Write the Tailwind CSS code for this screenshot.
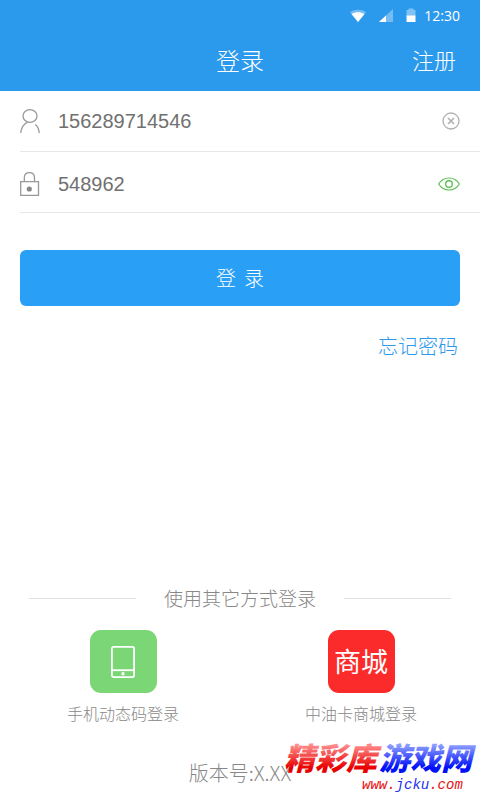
<!DOCTYPE html>
<html lang="zh-CN">
<head>
<meta charset="utf-8">
<meta name="viewport" content="width=device-width, initial-scale=1">
<title>登录</title>
<script src="https://cdn.jsdelivr.net/npm/@tailwindcss/browser@4"></script>
</head>
<body class="relative flex min-h-screen flex-col bg-white font-['Noto_Sans_CJK_SC',sans-serif] font-light text-[#888888]">
<header class="bg-[#2b99ec] text-white">
  <div class="flex h-8 items-center justify-end pr-5">
    <svg class="mr-3 h-4 w-4" viewBox="0 0 16 16" aria-hidden="true"><path d="M0 4.2C4.500 1 11.500 1 16 4.200L8 14z" fill="#fff" fill-opacity=".35"/><path d="M1.500 6C5.500 3.700 10.500 3.700 14.500 6L8 14z" fill="#fff"/></svg>
    <svg class="mr-3 h-4 w-4" viewBox="0 0 16 16" aria-hidden="true"><path d="M15 1v13H1z" fill="#fff" fill-opacity=".35"/><path d="M8 7.500V14H1z" fill="#fff"/></svg>
    <svg class="mr-2 h-4 w-[10px]" viewBox="0 0 10 16" aria-hidden="true"><path d="M.5 2h2V.5h5V2h2v6h-9z" fill="#fff" fill-opacity=".4"/><path d="M.5 7.500h9V14h-9z" fill="#fff"/></svg>
    <time class="font-['Open_Sans',sans-serif] text-sm font-normal">12:30</time>
  </div>
  <div class="grid h-[59px] grid-cols-3 items-center px-6 pb-1">
    <h1 class="col-start-2 text-center text-2xl">登录</h1>
    <a href="#" class="text-right text-[22px]">注册</a>
  </div>
</header>
<main class="flex flex-1 flex-col">
  <form>
    <div class="ml-5 flex h-[61px] items-center border-b border-[#e8e8e8] pr-5">
      <label for="phone" aria-label="手机号" class="w-[38px] shrink-0">
        <svg class="h-6 w-5" viewBox="0 0 20 24" fill="none" stroke="#999" stroke-width="1.300" aria-hidden="true"><ellipse cx="10" cy="7" rx="7" ry="6.300"/><path d="M.7 24C1.200 19 3.500 15.300 7.500 13.200M19.300 24C18.800 20 17.700 17.300 15.300 15.500"/></svg>
      </label>
      <input id="phone" type="tel" value="156289714546" class="min-w-0 flex-1 bg-transparent font-['Liberation_Sans',sans-serif] text-xl text-[#707070] outline-none">
      <button type="button" aria-label="清除">
        <svg class="block h-[18px] w-[18px]" viewBox="0 0 18 18" fill="none" stroke="#b0b0b0" stroke-width="1.300" aria-hidden="true"><circle cx="9" cy="9" r="8"/><path d="M6 6l6 6M12 6l-6 6" stroke-width="1.600"/></svg>
      </button>
    </div>
    <div class="ml-5 flex h-[61px] items-center border-b border-[#e8e8e8] pt-1 pr-5">
      <label for="password" aria-label="密码" class="w-[38px] shrink-0">
        <svg class="h-6 w-5" viewBox="0 0 20 24" fill="none" stroke="#999" stroke-width="1.300" aria-hidden="true"><path d="M.7 9.700h17.800v13.600H.7zM4.300 9.700V6C4.300 2.500 6.500.7 9.400.7S14.500 2.500 14.500 6v3.700"/><circle cx="9.300" cy="17" r="2.600" fill="#888" stroke="none"/></svg>
      </label>
      <input id="password" type="text" value="548962" class="min-w-0 flex-1 bg-transparent font-['Liberation_Sans',sans-serif] text-xl text-[#707070] outline-none">
      <button type="button" aria-label="显示密码">
        <svg class="block h-[14px] w-[22px]" viewBox="0 0 22 14" fill="none" stroke="#5cc154" stroke-width="1.200" aria-hidden="true"><path d="M.7 7C3 3 6.500 1 11 1s8 2 10.300 6C19 11 15.500 13 11 13S3 11 .7 7z"/><circle cx="11" cy="7" r="3.300" stroke-width="1.400"/></svg>
      </button>
    </div>
    <div class="px-5 pt-[37px]">
      <button type="submit" class="flex h-14 w-full items-center justify-center gap-2 rounded-md bg-[#2a9ff6] text-xl text-white"><span>登</span> <span>录</span></button>
    </div>
    <div class="flex justify-end px-[22px] pt-6">
      <a href="#" class="text-xl leading-8 text-[#2b99ec]">忘记密码</a>
    </div>
  </form>
  <section class="mt-auto">
    <div class="flex items-center px-[29px]">
      <span class="h-px flex-1 bg-[#e0e0e0]"></span>
      <h2 class="px-7 text-[19px] leading-6">使用其它方式登录</h2>
      <span class="h-px flex-1 bg-[#e0e0e0]"></span>
    </div>
    <div class="grid grid-cols-2 pt-5 pl-1">
      <a href="#" class="flex flex-col items-center">
        <span class="flex h-[63px] w-[67px] items-center justify-center rounded-[11px] bg-[#7bd775]">
          <svg class="h-8 w-6" viewBox="0 0 24 32" fill="none" stroke="#fff" stroke-width="1.800" aria-hidden="true"><rect x=".9" y=".9" width="22.200" height="30.200" rx="1.800"/><path d="M1 24.200h22"/><circle cx="12" cy="27.700" r="1.700" fill="#fff" stroke="none"/></svg>
        </span>
        <span class="pt-2 text-base leading-6">手机动态码登录</span>
      </a>
      <a href="#" class="flex flex-col items-center">
        <span class="flex h-[63px] w-[67px] items-center justify-center rounded-[11px] bg-[#fc2b2b] text-[27px] font-normal text-white">商城</span>
        <span class="pt-2 text-base leading-6">中油卡商城登录</span>
      </a>
    </div>
  </section>
  <footer class="pt-[34px] pb-[13px] text-center text-xl leading-7">版本号:X.XX</footer>
</main>
<a href="#" aria-label="精彩库游戏网" class="absolute right-0 bottom-0">
  <svg class="block h-[72px] w-[200px] overflow-visible" viewBox="0 0 200 72">
    <defs>
      <linearGradient id="red" x1="0" y1="0" x2="0" y2="1"><stop offset=".25" stop-color="#ff8c8c"/><stop offset=".75" stop-color="#e80000"/></linearGradient>
      <linearGradient id="blue" x1="0" y1="0" x2="0" y2="1"><stop offset=".25" stop-color="#8c9cff"/><stop offset=".75" stop-color="#0010f8"/></linearGradient>
    </defs>
    <g class="font-['Noto_Sans_CJK_SC',sans-serif] text-[31px] font-black italic">
      <text x="4" y="42" fill="url(#red)">精彩库</text>
      <text x="99" y="42" fill="url(#blue)">游戏网</text>
    </g>
    <text x="82" y="61" class="font-['Liberation_Mono',monospace] text-sm font-normal italic" fill="#e81010">www.<tspan fill="#2030f0">jcku</tspan>.com</text>
  </svg>
</a>
</body>
</html>
